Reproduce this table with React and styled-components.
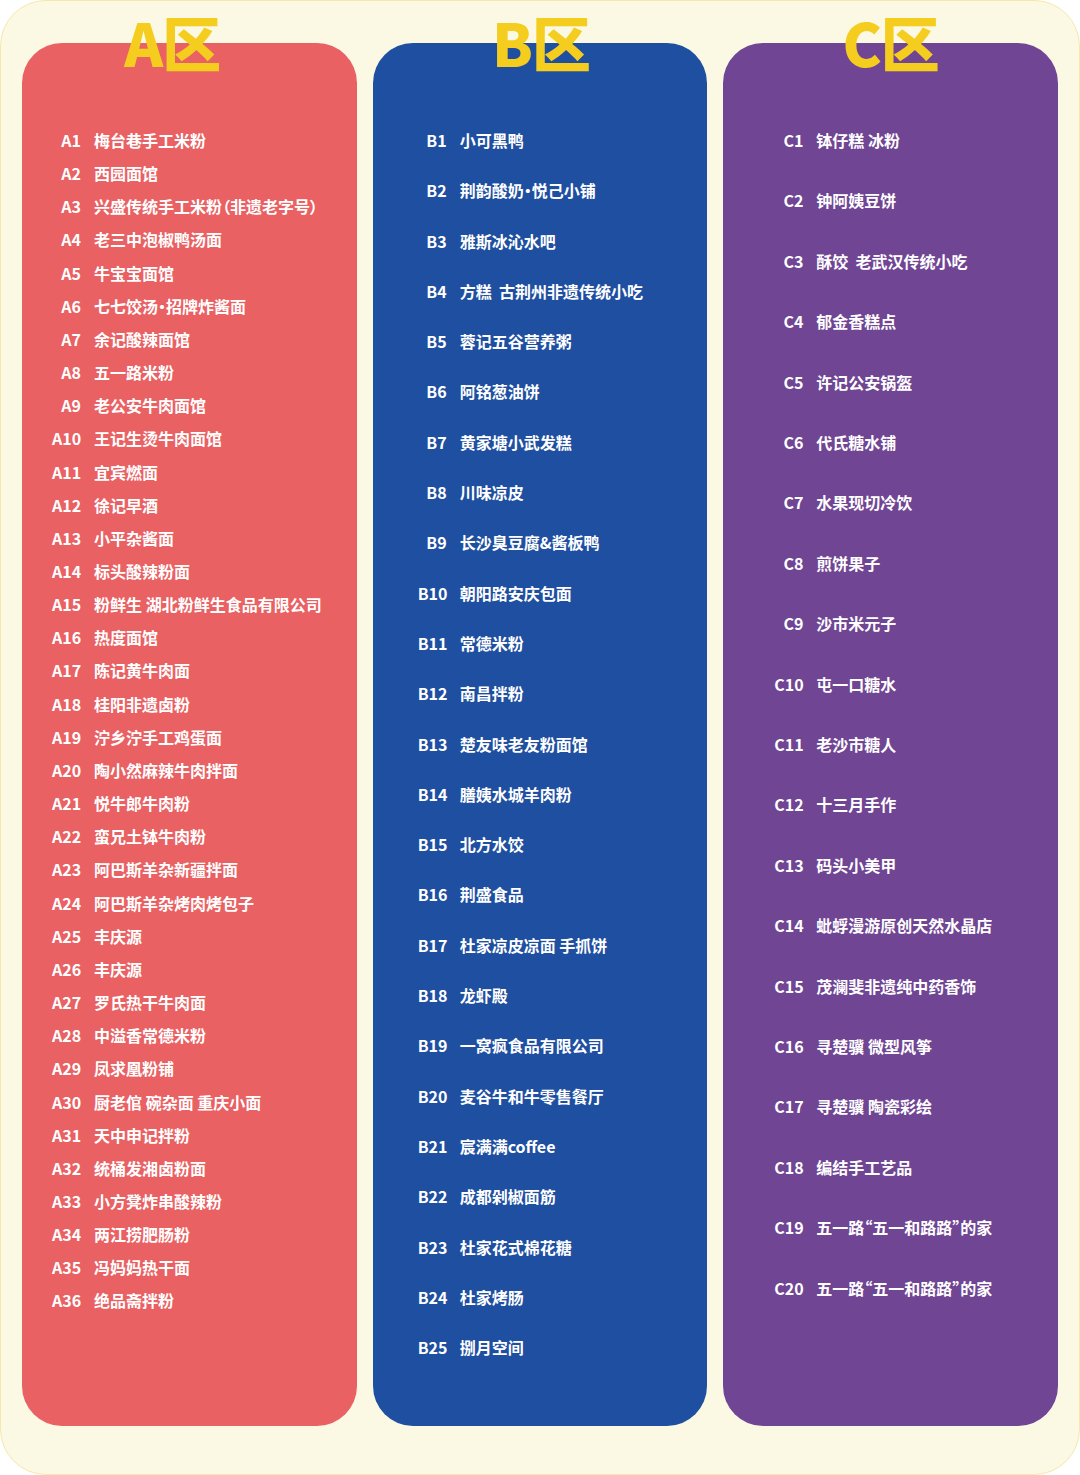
import React from "react";
import styled, { createGlobalStyle } from "styled-components";

const Global = createGlobalStyle`
  html, body { margin: 0; padding: 0; background: #ffffff; }
  body { font-family: "Noto Sans CJK SC", "Noto Sans", sans-serif; }
`;

const Frame = styled.div`
  box-sizing: border-box;
  width: 1080px;
  height: 1475px;
  background: #fbf9e4;
  border: 1px solid #f4e8ad;
  border-radius: 46px;
  padding: 11px 21px 48px;
  display: grid;
  grid-template-columns: repeat(3, 1fr);
  column-gap: 16px;
`;

const Column = styled.section`
  display: flex;
  flex-direction: column;
  min-width: 0;
`;

const Title = styled.h2`
  position: relative;
  z-index: 1;
  margin: 0 0 -46px;
  height: 77px;
  display: flex;
  justify-content: center;
  align-items: flex-start;
  transform: translateX(${(p) => p.$shift || 0}px);
  font-family: "Noto Sans CJK SC", "Noto Sans", sans-serif;
  font-weight: 900;
  font-size: 59px;
  line-height: 59px;
  color: #f4cd1f;
  letter-spacing: -1px;
`;

const Panel = styled.div`
  flex: 1;
  background: ${(p) => p.$bg};
  border-radius: 40px;
  box-sizing: border-box;
  padding-top: calc(97px - ${(p) => p.$row / 2}px);
  padding-left: ${(p) => p.$indent}px;
  display: flex;
  flex-direction: column;
`;

const Row = styled.div`
  display: flex;
  align-items: center;
  height: ${(p) => p.$row}px;
  color: #ffffff;
  font-family: "Noto Sans CJK SC", "Noto Sans", sans-serif;
  font-weight: 700;
  font-size: 16px;
  white-space: pre;
`;

const Code = styled.span`
  width: 29px;
  text-align: right;
  margin-right: 13px;
  flex: none;
`;

const Name = styled.span`
  font-feature-settings: "palt" 1;
`;

const A = [
  "梅台巷手工米粉", "西园面馆", "兴盛传统手工米粉（非遗老字号）", "老三中泡椒鸭汤面", "牛宝宝面馆",
  "七七饺汤•招牌炸酱面", "余记酸辣面馆", "五一路米粉", "老公安牛肉面馆", "王记生烫牛肉面馆",
  "宜宾燃面", "徐记早酒", "小平杂酱面", "标头酸辣粉面", "粉鲜生 湖北粉鲜生食品有限公司",
  "热度面馆", "陈记黄牛肉面", "桂阳非遗卤粉", "泞乡泞手工鸡蛋面", "陶小然麻辣牛肉拌面",
  "悦牛郎牛肉粉", "蛮兄土钵牛肉粉", "阿巴斯羊杂新疆拌面", "阿巴斯羊杂烤肉烤包子", "丰庆源",
  "丰庆源", "罗氏热干牛肉面", "中溢香常德米粉", "凤求凰粉铺", "厨老倌 碗杂面 重庆小面",
  "天中申记拌粉", "统桶发湘卤粉面", "小方凳炸串酸辣粉", "两江捞肥肠粉", "冯妈妈热干面",
  "绝品斋拌粉",
];

const B = [
  "小可黑鸭", "荆韵酸奶•悦己小铺", "雅斯冰沁水吧", "方糕  古荆州非遗传统小吃", "蓉记五谷营养粥",
  "阿铭葱油饼", "黄家塘小武发糕", "川味凉皮", "长沙臭豆腐&酱板鸭", "朝阳路安庆包面",
  "常德米粉", "南昌拌粉", "楚友味老友粉面馆", "膳姨水城羊肉粉", "北方水饺",
  "荆盛食品", "杜家凉皮凉面 手抓饼", "龙虾殿", "一窝疯食品有限公司", "麦谷牛和牛零售餐厅",
  "宸满满coffee", "成都剁椒面筋", "杜家花式棉花糖", "杜家烤肠", "捌月空间",
];

const C = [
  "钵仔糕 冰粉", "钟阿姨豆饼", "酥饺  老武汉传统小吃", "郁金香糕点", "许记公安锅盔",
  "代氏糖水铺", "水果现切冷饮", "煎饼果子", "沙市米元子", "屯一口糖水",
  "老沙市糖人", "十三月手作", "码头小美甲", "蚍蜉漫游原创天然水晶店", "茂澜斐非遗纯中药香饰",
  "寻楚骥 微型风筝", "寻楚骥 陶瓷彩绘", "编结手工艺品", "五一路“五一和路路”的家", "五一路“五一和路路”的家",
];

const zones = [
  { key: "A", items: A, bg: "#e96163", row: 33.17, indent: 30, shift: -17 },
  { key: "B", items: B, bg: "#1f4fa0", row: 50.3, indent: 45, shift: 1 },
  { key: "C", items: C, bg: "#704593", row: 60.42, indent: 51, shift: 0 },
];

export default function App() {
  return (
    <>
      <Global />
      <Frame>
        {zones.map((z) => (
          <Column key={z.key}>
            <Title $shift={z.shift}>{z.key}区</Title>
            <Panel $bg={z.bg} $row={z.row} $indent={z.indent}>
              {z.items.map((name, i) => (
                <Row key={i} $row={z.row}>
                  <Code>{z.key}{i + 1}</Code>
                  <Name>{name}</Name>
                </Row>
              ))}
            </Panel>
          </Column>
        ))}
      </Frame>
    </>
  );
}
